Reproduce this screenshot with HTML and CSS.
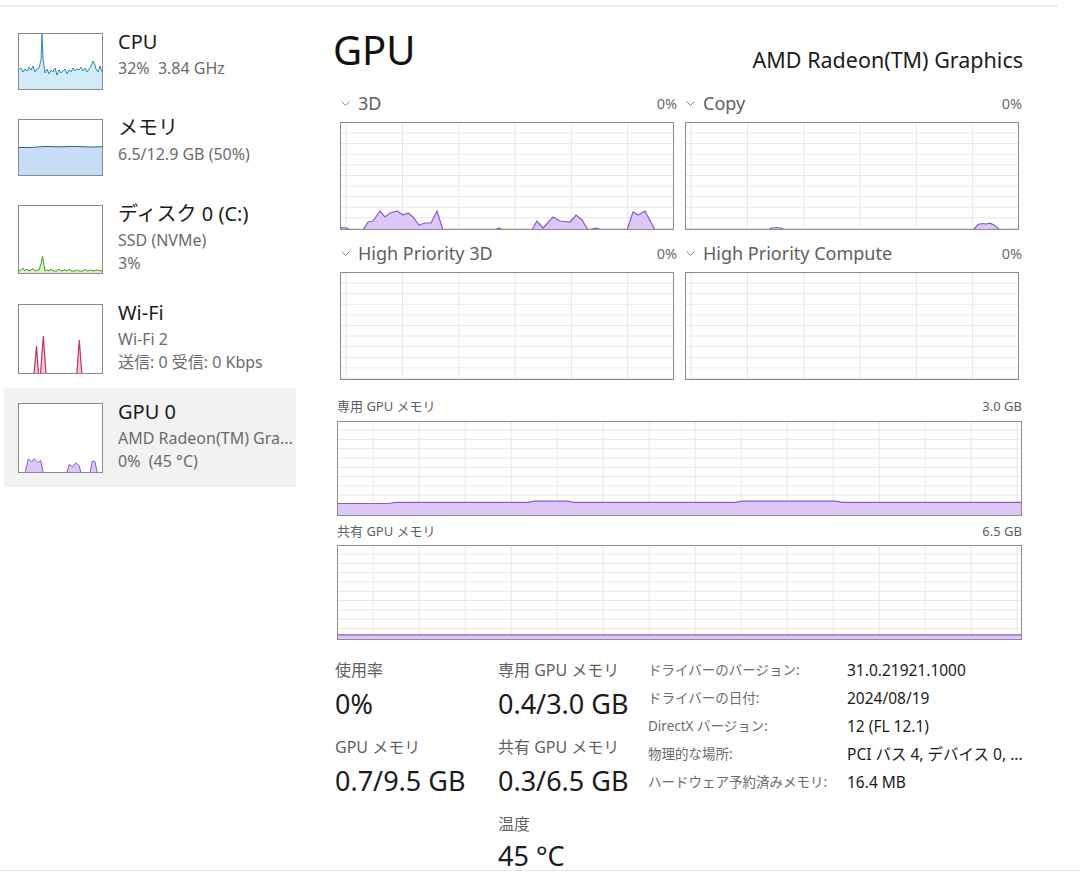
FILE: index.html
```html
<!DOCTYPE html>
<html lang="ja">
<head>
<meta charset="utf-8">
<title>GPU</title>
<link rel="stylesheet" href="styles.css">
</head>
<body>
<div class="topline"></div>
<div class="app">
  <aside class="sidebar">
    <div class="item">
      <div class="thumb">
        <svg class="t57" viewBox="19 34 83 55" preserveAspectRatio="none">
          <polygon class="cpu-fill" points="19,90 19,70 21,68 23,72 25,69 27,71 29,67 31,70 33,66 35,72 37,69 39,68 41,60 42,34 43,58 45,73 47,69 49,74 51,70 53,72 55,68 57,75 59,70 61,73 63,71 65,69 67,74 69,70 71,72 73,68 75,71 77,69 79,70 81,67 83,71 85,68 87,72 89,69 91,66 93,61 95,65 96,69 98,72 100,66 102,72 102,90"/>
          <polyline class="cpu-line" points="19,70 21,68 23,72 25,69 27,71 29,67 31,70 33,66 35,72 37,69 39,68 41,60 42,34 43,58 45,73 47,69 49,74 51,70 53,72 55,68 57,75 59,70 61,73 63,71 65,69 67,74 69,70 71,72 73,68 75,71 77,69 79,70 81,67 83,71 85,68 87,72 89,69 91,66 93,61 95,65 96,69 98,72 100,66 102,72"/>
        </svg>
      </div>
      <div class="meta">
        <div class="name">CPU</div>
        <div class="sub">32%&nbsp;&nbsp;3.84 GHz</div>
      </div>
    </div>
    <div class="item">
      <div class="thumb">
        <svg class="t57" viewBox="19 120 83 55" preserveAspectRatio="none">
          <polygon class="mem-fill" points="19,176 19,147.5 30,147.5 45,146.5 60,146.8 75,146.4 90,147 102,146.7 102,176"/>
          <polyline class="mem-line" points="19,147.5 30,147.5 45,146.5 60,146.8 75,146.4 90,147 102,146.7"/>
        </svg>
      </div>
      <div class="meta">
        <div class="name">メモリ</div>
        <div class="sub">6.5/12.9 GB (50%)</div>
      </div>
    </div>
    <div class="item">
      <div class="thumb">
        <svg class="t69" viewBox="19 206 83 67" preserveAspectRatio="none">
          <polygon class="disk-fill" points="19,274 19,271 21,270 23,268 25,271 27,269 29,271 31,270 33,268.5 35,271 37,270 39,270 41,264 42.5,256 44,265 45,271 47,270 49,271 51,269 53,271 57,271 59,269 61,271 65,270 67,271 69,269 71,271 75,271 77,270 79,271 83,271 85,269 87,271 91,270 93,271 97,270 102,271 102,274"/>
          <polyline class="disk-line" points="19,271 21,270 23,268 25,271 27,269 29,271 31,270 33,268.5 35,271 37,270 39,270 41,264 42.5,256 44,265 45,271 47,270 49,271 51,269 53,271 57,271 59,269 61,271 65,270 67,271 69,269 71,271 75,271 77,270 79,271 83,271 85,269 87,271 91,270 93,271 97,270 102,271"/>
        </svg>
      </div>
      <div class="meta">
        <div class="name">ディスク 0 (C:)</div>
        <div class="sub">SSD (NVMe)</div>
        <div class="sub">3%</div>
      </div>
    </div>
    <div class="item">
      <div class="thumb">
        <svg class="t70" viewBox="19 304 83 68" preserveAspectRatio="none">
          <polygon class="wifi-fill" points="34,373 36.5,345 38.5,373"/>
          <polygon class="wifi-fill" points="40.5,373 43.3,335 46,373"/>
          <polygon class="wifi-fill" points="76.8,373 79.3,339 81.8,373"/>
          <polyline class="wifi-line" points="19,372.5 34,372.5 36.5,345 38.5,372.5 40.5,372.5 43.3,335 46,372.5 76.8,372.5 79.3,339 81.8,372.5 102,372.5"/>
        </svg>
      </div>
      <div class="meta">
        <div class="name">Wi-Fi</div>
        <div class="sub">Wi-Fi 2</div>
        <div class="sub">送信: 0 受信: 0 Kbps</div>
      </div>
    </div>
    <div class="item selected">
      <div class="thumb">
        <svg class="t70" viewBox="19 403 83 68" preserveAspectRatio="none">
          <polygon class="gpu-fill" points="25,472 28.3,458 31.7,460.7 34.3,457.7 38.3,461.7 40.7,459.3 43.3,472"/>
          <polygon class="gpu-fill" points="66.7,472 69.3,463.3 72.7,466 76,461.7 79.3,465 81,472"/>
          <polygon class="gpu-fill" points="90,472 92.3,460 95,460.7 97.3,472"/>
        </svg>
      </div>
      <div class="meta">
        <div class="name">GPU 0</div>
        <div class="sub">AMD Radeon(TM) Gra...</div>
        <div class="sub">0%&nbsp;&nbsp;(45 °C)</div>
      </div>
    </div>
  </aside>

  <main class="content">
    <header class="head">
      <h1>GPU</h1>
      <div class="model">AMD Radeon(TM) Graphics</div>
    </header>

    <section class="engines">
      <div class="engine">
        <div class="elabel">
          <svg class="chev" viewBox="0 0 9 5"><polyline points="0.5,0.5 4.5,4.5 8.5,0.5"/></svg>
          <span>3D</span><span class="pct">0%</span>
        </div>
        <div class="graph eng">
          <svg viewBox="341 123 332 106" preserveAspectRatio="none">
            <path class="gpu-area" d="M341 230 L341 227.5 L347 228 L350 230 L363 230 L368 222 L373 221 L380 211 L385 217 L390 213 L397 211 L403 215 L408 213 L413 217 L419 225 L425 223 L431 223 L437 211 L443 230 L495 230 L499 228 L503 230 L532 230 L537 221 L543 228 L553 217 L560 221 L570 222 L576 215 L582 220 L588 230 L596 228 L602 230 L627 230 L633 212 L638 215 L645 211 L655 230 L673 230 Z"/>
          </svg>
        </div>
      </div>
      <div class="engine">
        <div class="elabel">
          <svg class="chev" viewBox="0 0 9 5"><polyline points="0.5,0.5 4.5,4.5 8.5,0.5"/></svg>
          <span>Copy</span><span class="pct">0%</span>
        </div>
        <div class="graph eng">
          <svg viewBox="686 123 332 106" preserveAspectRatio="none">
            <path class="gpu-area" d="M768 230 L772 228 L777 227.5 L781 228 L785 230 Z M973 230 L978 224.5 L982 223.5 L986 224 L990 223.2 L994 225 L1000 230 Z"/>
          </svg>
        </div>
      </div>
      <div class="engine">
        <div class="elabel">
          <svg class="chev" viewBox="0 0 9 5"><polyline points="0.5,0.5 4.5,4.5 8.5,0.5"/></svg>
          <span>High Priority 3D</span><span class="pct">0%</span>
        </div>
        <div class="graph eng"></div>
      </div>
      <div class="engine">
        <div class="elabel">
          <svg class="chev" viewBox="0 0 9 5"><polyline points="0.5,0.5 4.5,4.5 8.5,0.5"/></svg>
          <span>High Priority Compute</span><span class="pct">0%</span>
        </div>
        <div class="graph eng"></div>
      </div>
    </section>

    <section class="mem">
      <div class="mlabel"><span>専用 GPU メモリ</span><span>3.0 GB</span></div>
      <div class="graph memg">
        <svg viewBox="338 422 683 93" preserveAspectRatio="none">
          <path class="gpu-area" d="M337 517 L337 503.5 L388 503.5 L396 502.3 L528 502.3 L534 501.2 L568 501.2 L574 502.3 L736 502.3 L742 501.2 L836 501.2 L842 502.3 L1022 502.3 L1022 517 Z"/>
        </svg>
      </div>
      <div class="mlabel second"><span>共有 GPU メモリ</span><span>6.5 GB</span></div>
      <div class="graph memg">
        <svg viewBox="338 546 683 93" preserveAspectRatio="none">
          <path class="gpu-area" d="M337 641 L337 634.8 L1022 634.8 L1022 641 Z"/>
        </svg>
      </div>
    </section>

    <section class="stats">
      <div class="col c1">
        <div class="slabel">使用率</div>
        <div class="svalue">0%</div>
        <div class="slabel">GPU メモリ</div>
        <div class="svalue">0.7/9.5 GB</div>
      </div>
      <div class="col c2">
        <div class="slabel">専用 GPU メモリ</div>
        <div class="svalue">0.4/3.0 GB</div>
        <div class="slabel">共有 GPU メモリ</div>
        <div class="svalue">0.3/6.5 GB</div>
        <div class="slabel">温度</div>
        <div class="svalue last">45 °C</div>
      </div>
      <div class="details">
        <div class="dk">ドライバーのバージョン:</div><div class="dv">31.0.21921.1000</div>
        <div class="dk">ドライバーの日付:</div><div class="dv">2024/08/19</div>
        <div class="dk">DirectX バージョン:</div><div class="dv">12 (FL 12.1)</div>
        <div class="dk">物理的な場所:</div><div class="dv">PCI バス 4, デバイス 0, ...</div>
        <div class="dk">ハードウェア予約済みメモリ:</div><div class="dv">16.4 MB</div>
      </div>
    </section>
  </main>
</div>
<div class="bottomline"></div>
</body>
</html>
```

FILE: styles.css
```css
* { box-sizing: border-box; margin: 0; padding: 0; }
html, body { background: #ffffff; }
body {
  width: 1080px;
  height: 872px;
  overflow: hidden;
  font-family: "Noto Sans", "Noto Sans CJK JP", sans-serif;
  color: #1b1b1b;
}

.topline { margin-top: 5px; width: 1058px; height: 2px; background: #ececec; }
.bottomline { height: 1px; background: #e6e6e6; }

.app { display: flex; height: 863px; }

/* sidebar */
.sidebar { width: 296px; flex: none; padding: 11px 0 0 4px; display: flex; flex-direction: column; }
.item { display: flex; align-items: flex-start; gap: 15px; padding: 15px 0 14px 14px; }
.item.selected { background: #f2f2f2; }
.thumb { flex: none; width: 85px; border: 1px solid #8a8a8a; background: #fff; }
.thumb svg { display: block; width: 83px; }
.thumb .t57 { height: 55px; }
.thumb .t69 { height: 67px; }
.thumb .t70 { height: 68px; }
.meta { flex: 1; min-width: 0; margin-top: -6px; }
.name { font-size: 20px; line-height: 30px; color: #1b1b1b; white-space: nowrap; }
.sub { font-size: 16px; line-height: 23px; color: #6b6b6b; white-space: nowrap; overflow: hidden; }

.cpu-fill { fill: #d3ebf6; stroke: none; }
.cpu-line { fill: none; stroke: #2a8db5; stroke-width: 1; }
.mem-fill { fill: #c6dcf7; stroke: none; }
.mem-line { fill: none; stroke: #2f5f98; stroke-width: 1; }
.disk-fill { fill: #dcefcf; stroke: none; }
.disk-line { fill: none; stroke: #4e9a22; stroke-width: 1; }
.wifi-fill { fill: #f3c9d9; stroke: none; }
.wifi-line { fill: none; stroke: #bf3569; stroke-width: 1.2; }
.gpu-fill { fill: #dcc8f5; stroke: #8d57d4; stroke-width: 1; }

/* content */
.content { width: 690px; margin-left: 37px; display: flex; flex-direction: column; }
.head { display: flex; justify-content: space-between; align-items: flex-end; margin-top: 22px; }
.head h1 { font-size: 40px; font-weight: 400; line-height: 42px; color: #111; }
.model { font-size: 21.5px; line-height: 22px; color: #1b1b1b; }

.engines {
  display: grid;
  grid-template-columns: 334px 334px;
  column-gap: 11px;
  row-gap: 11px;
  margin: 20px 0 0 7px;
}
.elabel {
  display: flex;
  align-items: center;
  height: 24px;
  padding-left: 1px;
  margin-bottom: 7px;
  font-size: 18px;
  color: #5e5e5e;
}
.chev { width: 9px; height: 5px; margin-right: 8px; flex: none; }
.chev polyline { fill: none; stroke: #8a8a8a; stroke-width: 1; }
.pct { margin-left: auto; margin-right: -3px; font-size: 14.5px; color: #6b6b6b; }

.graph {
  border: 1px solid #8c8c8c;
  background-color: #fff;
  overflow: hidden;
}
.graph svg { display: block; width: 100%; height: 100%; }
.eng {
  height: 108px;
  background-image:
    linear-gradient(90deg, #e6e6e6 1px, transparent 1px),
    linear-gradient(180deg, #e6e6e6 1px, transparent 1px);
  background-size: 56.3px 100%, 100% 10.6px;
  background-position: 4.7px 0, 0 -1px;
}
.gpu-area { fill: #dcc8f5; stroke: #8d57d4; stroke-width: 1.2; }

.mem { margin: 18px 1px 0 4px; }
.mlabel {
  display: flex;
  justify-content: space-between;
  font-size: 13px;
  line-height: 17px;
  color: #5e5e5e;
  margin-bottom: 6px;
}
.mlabel.second { margin-top: 7px; margin-bottom: 5px; }
.memg {
  height: 95px;
  background-image:
    linear-gradient(90deg, #e6e6e6 1px, transparent 1px),
    linear-gradient(180deg, #e6e6e6 1px, transparent 1px);
  background-size: 46px 100%, 100% 9.3px;
  background-position: 34.7px 0, 0 -1.7px;
}

/* stats */
.stats { display: flex; align-items: flex-start; margin: 16px 0 0 2px; }
.col { flex: none; padding-top: 3px; }
.c1 { width: 163px; }
.c2 { width: 150px; }
.slabel { font-size: 16px; line-height: 22px; color: #5f5f5f; white-space: nowrap; }
.svalue { font-size: 27px; line-height: 36px; margin: 5px 0 14px; color: #1b1b1b; white-space: nowrap; }
.svalue.last { line-height: 28px; margin: 7px 0 0; }
.details {
  display: grid;
  grid-template-columns: 199px auto;
  align-content: start;
  font-size: 16px;
  line-height: 28px;
}
.dk { font-size: 13.5px; color: #6b6b6b; white-space: nowrap; }
.dv { font-size: 15.5px; color: #1b1b1b; white-space: nowrap; }
```
